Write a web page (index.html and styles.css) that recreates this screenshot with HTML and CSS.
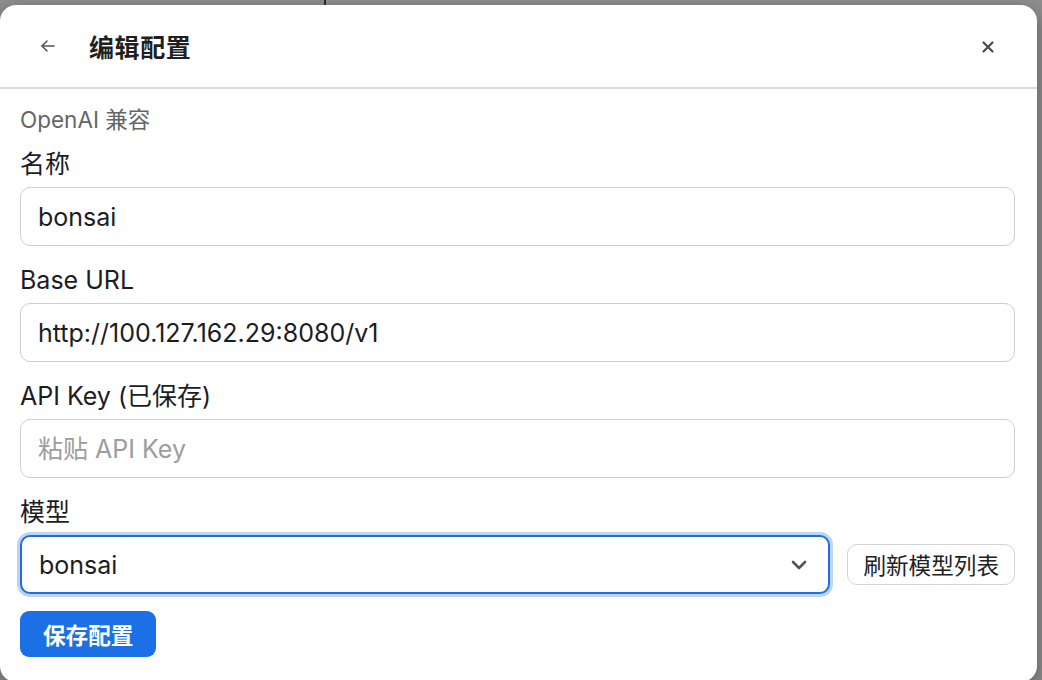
FILE: index.html
```html
<!DOCTYPE html>
<html lang="zh-CN">
<head>
  <meta charset="UTF-8">
  <meta name="viewport" content="width=device-width, initial-scale=1.0">
  <title>编辑配置</title>
  <link rel="stylesheet" href="styles.css">
</head>
<body>
  <div class="backdrop"><span class="backdrop-mark"></span></div>

  <div class="dialog">
    <header class="dialog-head">
      <button class="icon-btn back-btn" aria-label="返回">
        <svg width="18" height="18" viewBox="0 0 18 18" fill="none" stroke="#555" stroke-width="1.6" stroke-linecap="round" stroke-linejoin="round">
          <path d="M15 9H3"/>
          <path d="M8 4L3 9l5 5"/>
        </svg>
      </button>
      <h2 class="dialog-title">编辑配置</h2>
      <button class="icon-btn close-btn" aria-label="关闭">
        <svg width="14" height="14" viewBox="0 0 14 14" fill="none" stroke="#4a4a4a" stroke-width="2.2" stroke-linecap="round">
          <path d="M2.5 2.5l9 9M11.5 2.5l-9 9"/>
        </svg>
      </button>
    </header>

    <div class="dialog-body">
      <div class="provider">OpenAI 兼容</div>

      <div class="field first">
        <label for="name">名称</label>
        <input id="name" class="text-input" type="text" value="bonsai">
      </div>

      <div class="field">
        <label for="base-url">Base URL</label>
        <input id="base-url" class="text-input" type="text" value="http://100.127.162.29:8080/v1">
      </div>

      <div class="field">
        <label for="api-key">API Key (已保存)</label>
        <input id="api-key" class="text-input" type="password" placeholder="粘贴 API Key">
      </div>

      <div class="field">
        <label for="model">模型</label>
        <div class="model-row">
          <div class="select-wrap">
            <select id="model" class="select-input">
              <option>bonsai</option>
            </select>
            <svg class="chevron" width="18" height="12" viewBox="0 0 18 12" fill="none" stroke="#555" stroke-width="2.6" stroke-linecap="round" stroke-linejoin="round">
              <path d="M3 3l6 6 6-6"/>
            </svg>
          </div>
          <button class="btn-secondary">刷新模型列表</button>
        </div>
      </div>

      <button class="btn-primary">保存配置</button>
    </div>
  </div>
</body>
</html>
```

FILE: styles.css
```css
* { margin: 0; padding: 0; box-sizing: border-box; }

body {
  font-family: Inter, "Noto Sans CJK SC", sans-serif;
  background: #8d8d8d;
  color: #1d1d1f;
  overflow: hidden;
  height: 680px;
}

.backdrop { height: 5px; position: relative; }
.backdrop-mark {
  position: absolute; left: 324px; top: 0;
  width: 2px; height: 5px; background: #2a2a2a;
}

.dialog {
  width: 1037px; height: 677px;
  background: #fff; border-radius: 16px;
  box-shadow: 0 6px 18px rgba(0, 0, 0, 0.35);
  display: flex; flex-direction: column;
}

.dialog-head {
  height: 84px; flex: none;
  display: flex; align-items: center;
  padding: 0 31px 0 30px;
  border-bottom: 2px solid #d9d9dd;
}

.icon-btn {
  background: none; border: none; cursor: pointer;
  display: flex; align-items: center; justify-content: center;
  width: 36px; height: 36px;
}

.close-btn { margin-top: 2px; }

.dialog-title {
  font-size: 25px; font-weight: 700; letter-spacing: 0.6px;
  margin-left: 23px; flex: 1; color: #1f1f1f;
}

.dialog-body { padding: 15px 22px 0 20px; }

.provider { font-size: 22.5px; line-height: 32px; color: #666; }

.field { margin-top: 18px; }
.field.first { margin-top: 12px; }

.field label {
  display: block; font-size: 25px; line-height: 32px;
  margin-bottom: 7px; color: #1d1d1f;
}

.text-input, .select-input {
  width: 100%; height: 59px;
  font-family: inherit; font-size: 25px; color: #1d1d1f;
  border: 1.5px solid #cfcfd3; border-radius: 10px;
  padding: 0 17px; background: #fff; outline: none;
}

.text-input::placeholder { color: #9d9d9d; }

.model-row { display: flex; align-items: center; gap: 17px; }

.select-wrap { flex: 1; position: relative; }

.select-input {
  appearance: none; -webkit-appearance: none;
  border: 2px solid #1e6fd9;
  box-shadow: 0 0 0 3px #bcd4f6;
}

.chevron { position: absolute; right: 22px; top: 24px; pointer-events: none; }

.btn-secondary {
  height: 41px; padding: 0 15px;
  font-family: inherit; font-size: 22.6px; color: #222;
  background: #fff; border: 1.5px solid #d3d3d6; border-radius: 10px;
  cursor: pointer;
}

.btn-primary {
  margin-top: 17px; height: 46px; padding: 0 23px;
  font-family: inherit; font-size: 22.6px; font-weight: 700; color: #fff;
  background: #1c70e6; border: none; border-radius: 9px;
  cursor: pointer;
}
```
